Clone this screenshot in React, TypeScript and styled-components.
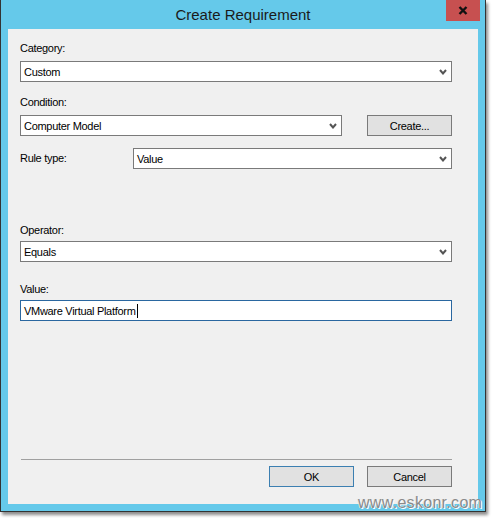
import styled, { createGlobalStyle } from "styled-components";

const GlobalStyle = createGlobalStyle`
  html, body {
    margin: 0;
    padding: 0;
    background: #ffffff;
  }
  body {
    font-family: "Liberation Sans", Arial, sans-serif;
    color: #000;
  }
`;

const Page = styled.div`
  position: relative;
  width: 493px;
  height: 518px;
  overflow: hidden;
  background: #ffffff;
`;

const Window = styled.div`
  width: 484px;
  height: 511px;
  background: #65c9ea;
  border: 1px solid #333333;
  border-top: none;
  box-shadow: 2px 3px 3px rgba(0, 0, 0, 0.45);
  display: flex;
  flex-direction: column;
`;

const TitleBar = styled.div`
  height: 29px;
  display: grid;
  grid-template-columns: 1fr auto 1fr;
`;

const Title = styled.div`
  grid-column: 2;
  font-size: 15px;
  line-height: 29px;
  color: #1b1b1b;
`;

const CloseButton = styled.div`
  grid-column: 3;
  justify-self: end;
  width: 34px;
  height: 21px;
  margin-right: 5px;
  background: #c75050;
  display: flex;
  align-items: center;
  justify-content: center;
`;

const Content = styled.div`
  flex: 1;
  margin: 0 7px 7px 7px;
  background: #f0f0f0;
  padding: 12px 26px 17px 12px;
  display: flex;
  flex-direction: column;
  font-size: 11px;
  letter-spacing: -0.3px;
`;

const Field = styled.div<{ $top: number }>`
  margin-top: ${(p) => p.$top}px;
  display: flex;
  flex-direction: column;
`;

const Label = styled.div<{ $gap?: number }>`
  height: 15px;
  line-height: 15px;
  margin-bottom: ${(p) => p.$gap ?? 0}px;
`;

const Select = styled.div`
  box-sizing: border-box;
  height: 21px;
  border: 1px solid #7a7a7a;
  background: #ffffff;
  padding: 0 4px 0 3px;
  display: flex;
  align-items: center;
  justify-content: space-between;
`;

const TextInput = styled.div`
  box-sizing: border-box;
  height: 21px;
  border: 1px solid #2a67a0;
  background: #ffffff;
  padding: 0 3px;
  display: flex;
  align-items: center;
`;

const Caret = styled.span`
  display: inline-block;
  width: 1px;
  height: 14px;
  background: #000;
  margin-left: 1px;
`;

const ConditionRow = styled.div`
  display: grid;
  grid-template-columns: 1fr 85px;
  column-gap: 25px;
`;

const RuleRow = styled.div`
  margin-top: 12px;
  display: grid;
  grid-template-columns: 113px 1fr;
  align-items: center;
`;

const Button = styled.div<{ $default?: boolean }>`
  box-sizing: border-box;
  width: 85px;
  height: 21px;
  background: #e1e1e1;
  border: 1px solid ${(p) => (p.$default ? "#3c7fb1" : "#7a7a7a")};
  display: flex;
  align-items: center;
  justify-content: center;
`;

const Spacer = styled.div`
  flex: 1;
`;

const Footer = styled.div`
  margin-left: 1px;
  border-top: 1px solid #a0a0a0;
  padding-top: 6px;
  display: flex;
  justify-content: flex-end;
  gap: 13px;
`;

const Watermark = styled.div`
  position: absolute;
  left: 358px;
  top: 494px;
  font-size: 16px;
  letter-spacing: 0.3px;
  color: #8a8a8a;
  text-shadow: 1px 1px 0 #ffffff, -1px 0 0 #e8e8e8;
`;

function Chevron() {
  return (
    <svg width="8" height="6" viewBox="0 0 8 6">
      <path d="M1 1 L4 4.5 L7 1" fill="none" stroke="#555555" strokeWidth="2" />
    </svg>
  );
}

function CloseGlyph() {
  return (
    <svg width="10" height="9" viewBox="0 0 10 9">
      <path d="M1.5 1 L8.5 8 M8.5 1 L1.5 8" stroke="#111111" strokeWidth="2.4" />
    </svg>
  );
}

function Dropdown({ value }: { value: string }) {
  return (
    <Select>
      <span>{value}</span>
      <Chevron />
    </Select>
  );
}

export default function App() {
  return (
    <Page>
      <GlobalStyle />
      <Window>
        <TitleBar>
          <Title>Create Requirement</Title>
          <CloseButton>
            <CloseGlyph />
          </CloseButton>
        </TitleBar>
        <Content>
          <Field $top={0}>
            <Label $gap={5}>Category:</Label>
            <Dropdown value="Custom" />
          </Field>

          <Field $top={13}>
            <Label $gap={5}>Condition:</Label>
            <ConditionRow>
              <Dropdown value="Computer Model" />
              <Button>Create...</Button>
            </ConditionRow>
          </Field>

          <RuleRow>
            <Label>Rule type:</Label>
            <Dropdown value="Value" />
          </RuleRow>

          <Field $top={54}>
            <Label $gap={3}>Operator:</Label>
            <Dropdown value="Equals" />
          </Field>

          <Field $top={20}>
            <Label $gap={3}>Value:</Label>
            <TextInput>
              VMware Virtual Platform
              <Caret />
            </TextInput>
          </Field>

          <Spacer />

          <Footer>
            <Button $default>OK</Button>
            <Button>Cancel</Button>
          </Footer>
        </Content>
      </Window>
      <Watermark>www.eskonr.com</Watermark>
    </Page>
  );
}
